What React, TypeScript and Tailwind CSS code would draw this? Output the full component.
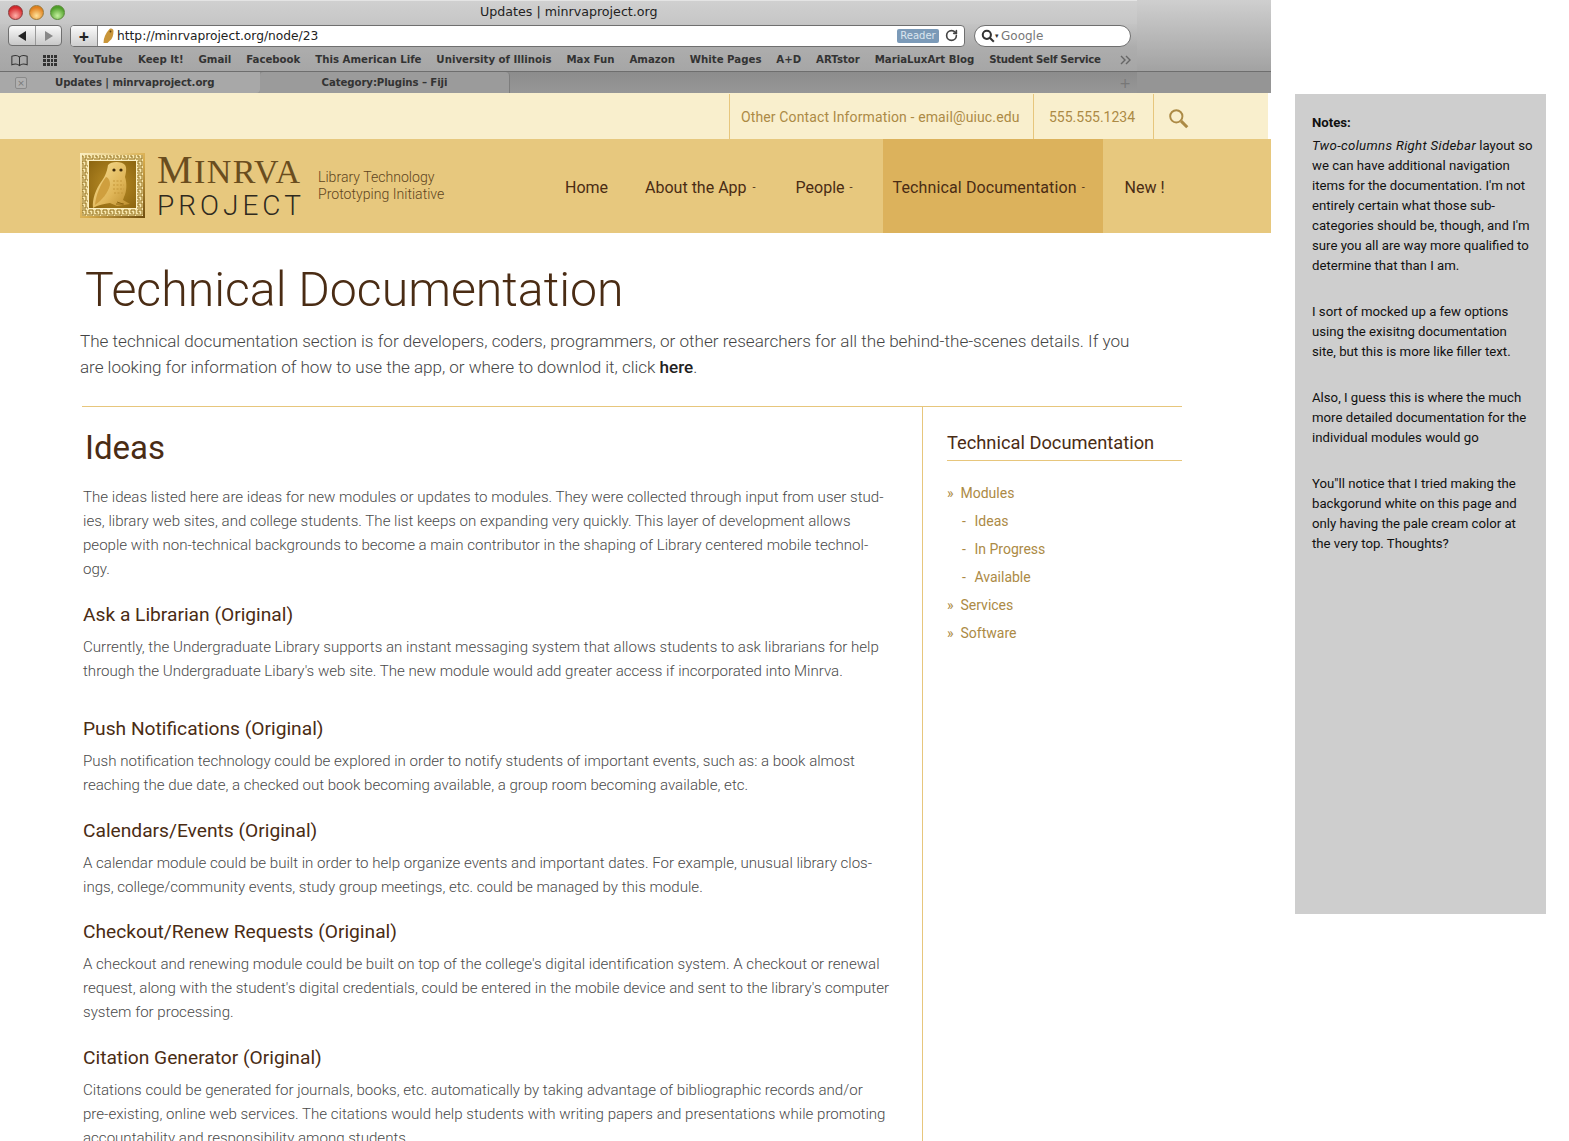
import React from "react";
import { RotateCw } from "lucide-react";

const bookmarks = [
  "Keep It!",
  "Gmail",
  "Facebook",
  "This American Life",
  "University of Illinois",
  "Max Fun",
  "Amazon",
  "White Pages",
  "A+D",
  "ARTstor",
  "MariaLuxArt Blog",
];

function Owl() {
  return (
    <svg viewBox="0 0 65 65" className="h-[65px] w-[65px] shrink-0">
      <defs>
        <linearGradient id="owlBody" x1="0" y1="0" x2="1" y2="1">
          <stop offset="0" stopColor="#f8e198" />
          <stop offset="0.6" stopColor="#e0b658" />
          <stop offset="1" stopColor="#b98a2a" />
        </linearGradient>
        <linearGradient id="frame" x1="0" y1="0" x2="1" y2="1">
          <stop offset="0" stopColor="#fbf0c4" />
          <stop offset="0.55" stopColor="#d8ac4c" />
          <stop offset="1" stopColor="#6e4c0c" />
        </linearGradient>
        <radialGradient id="inner" cx="0.5" cy="0.5" r="0.7">
          <stop offset="0" stopColor="#bd9028" />
          <stop offset="1" stopColor="#8c6510" />
        </radialGradient>
        <pattern id="keyBand" width="7" height="7" patternUnits="userSpaceOnUse">
          <path d="M0 6H6V1H2V4H4" fill="none" stroke="#8f6a16" strokeWidth="1" />
        </pattern>
      </defs>
      <rect width="65" height="65" fill="url(#frame)" />
      <rect x="2" y="2" width="61" height="61" fill="#f7e7ae" />
      <rect x="2" y="2" width="61" height="61" fill="url(#keyBand)" />
      <rect x="8" y="7" width="49" height="49" fill="#fbf0c4" />
      <rect x="9" y="8" width="47" height="47" fill="url(#inner)" />
      <path
        d="M28 12C31 8 42 8 45 12C47 15 46 20 45 24C47 30 47 38 44 44L43 47L50 51L37 53L30 50C24 51 18 52 13 55C12 46 16 36 21 29C24 25 27 20 28 12Z"
        fill="url(#owlBody)"
      />
      <path d="M26 24C20 32 16 42 15 52C22 47 28 40 30 32C30 28 29 25 26 24Z" fill="#cf9f3e" />
      <path d="M33 28h10M33 32h11M33 36h11M34 40h9" stroke="#c49638" strokeWidth="1" strokeDasharray="2 1.5" />
      <circle cx="34" cy="17" r="1.6" fill="#3f2a08" />
      <circle cx="41" cy="17" r="1.6" fill="#3f2a08" />
      <path d="M37 49l6 2M36 51h8" stroke="#8c6510" strokeWidth="1" />
    </svg>
  );
}

function Browser() {
  return (
    <div className="flex h-[93px] w-[1271px] bg-[#a3a3a3]">
      <div className="w-[1137px] shrink-0 text-[#222]">
        <div className="flex h-[24px] items-center border-t border-[#e4e4e4] bg-gradient-to-b from-[#d0d0d0] to-[#c6c6c6]">
          <div className="-mt-[1px] flex w-[65px] gap-[6px] pl-[8px]">
            <span className="h-[15px] w-[15px] shrink-0 rounded-full border border-[#8a3a3a] bg-[radial-gradient(circle_at_50%_75%,#ffb0a8,#d5282c_70%)]" />
            <span className="h-[15px] w-[15px] shrink-0 rounded-full border border-[#9a7a3a] bg-[radial-gradient(circle_at_50%_75%,#ffe39a,#e0801e_70%)]" />
            <span className="h-[15px] w-[15px] shrink-0 rounded-full border border-[#5a8a3a] bg-[radial-gradient(circle_at_50%_75%,#c4f09e,#4f9f2a_70%)]" />
          </div>
          <span className="ml-[415px] -mt-[1px] font-['DejaVu_Sans',sans-serif] text-[12.65px] leading-none">Updates | minrvaproject.org</span>
        </div>
        <div className="flex h-[23px] items-center bg-gradient-to-b from-[#c4c4c4] to-[#adadad] pl-[8px]">
          <div className="flex h-[21px] w-[54px] items-center rounded-[4px] border border-[#6f6f6f] bg-gradient-to-b from-[#fafafa] to-[#c8c8c8]">
            <span className="flex h-full w-[27px] items-center justify-center border-r border-[#999]">
              <svg viewBox="0 0 10 10" className="h-[10px] w-[10px]">
                <path d="M9 0v10L1 5z" fill="#222" />
              </svg>
            </span>
            <span className="flex flex-1 justify-center">
              <svg viewBox="0 0 10 10" className="h-[10px] w-[10px]">
                <path d="M1 0v10l8-5z" fill="#888" />
              </svg>
            </span>
          </div>
          <div className="ml-[8px] flex h-[22px] w-[895px] items-center rounded-[4px] border border-[#6f6f6f] bg-white">
            <span className="flex h-full w-[27px] items-center justify-center rounded-l-[3px] border-r border-[#888] bg-gradient-to-b from-[#fafafa] to-[#cfcfcf] text-[18px] font-bold leading-none">+</span>
            <svg viewBox="0 0 12 16" className="ml-[4px] h-[16px] w-[13px] shrink-0">
              <path d="M7 1c2-1 4 0 4 2 0 4-1 8-4 10l-2 2-4 0c0-5 2-10 6-14z" fill="#c9963a" />
              <circle cx="8" cy="3.5" r="0.9" fill="#5a3c0a" />
            </svg>
            <span className="ml-[2px] pt-[1px] font-['DejaVu_Sans',sans-serif] text-[12.25px] leading-none">http://minrvaproject.org/node/23</span>
            <span className="ml-auto flex h-[14px] w-[42px] items-center justify-center rounded-[2px] bg-[#7b9ab8] font-['DejaVu_Sans',sans-serif] text-[10px] leading-none text-[#dce6ef]">Reader</span>
            <RotateCw className="ml-[6px] mr-[6px] h-[13px] w-[13px] text-[#444]" strokeWidth={3} />
          </div>
          <div className="ml-[9px] flex h-[22px] w-[157px] items-center rounded-full border border-[#6f6f6f] bg-white pl-[6px]">
            <svg viewBox="0 0 24 24" className="h-[14px] w-[14px] shrink-0" fill="none" stroke="#333" strokeWidth="3.5">
              <circle cx="10" cy="10" r="7" />
              <path d="M15 15l7 7" />
            </svg>
            <span className="text-[7px] leading-none text-[#333]">▾</span>
            <span className="ml-[2px] font-['DejaVu_Sans',sans-serif] text-[12px] leading-none text-[#777]">Google</span>
          </div>
        </div>
        <div className="flex h-[25px] items-center border-b border-[#6e6e6e] bg-gradient-to-b from-[#adadad] to-[#a6a6a6] pl-[11px] pt-[2px] font-['DejaVu_Sans',sans-serif] text-[10.2px] font-bold leading-none text-[#333]">
          <svg viewBox="0 0 20 14" className="h-[13px] w-[17px] shrink-0" fill="none" stroke="#333" strokeWidth="1.2">
            <path d="M10 3C8 1 4 1 1 2v10c3-1 7-1 9 1 2-2 6-2 9-1V2c-3-1-7-1-9 1zM10 3v10" />
          </svg>
          <span className="ml-[15px] grid h-[11px] w-[14px] shrink-0 grid-cols-4 gap-px">
            {Array.from({ length: 12 }).map((_, i) => (
              <span key={i} className="bg-[#333]" />
            ))}
          </span>
          <div className="ml-[16px] flex items-center gap-[14.85px]">
            <span className="whitespace-nowrap tracking-[0.3px]">YouTube</span>
            {bookmarks.map((b) => (
              <span key={b} className="whitespace-nowrap">{b}</span>
            ))}
            <span className="whitespace-nowrap tracking-[-0.3px]">Student Self Service</span>
          </div>
          <svg viewBox="0 0 12 10" className="ml-[19px] h-[10px] w-[12px] shrink-0" fill="none" stroke="#666" strokeWidth="1.4">
            <path d="M1 1l4 4-4 4M6 1l4 4-4 4" />
          </svg>
        </div>
        <div className="flex h-[21px] items-stretch bg-gradient-to-b from-[#8c8c8c] to-[#979797] font-['DejaVu_Sans',sans-serif] text-[10.2px] font-bold leading-none tracking-[-0.1px] text-[#333]">
          <div className="flex w-[260px] items-center rounded-br-[4px] bg-[#a8a8a8] pl-[15px] pt-[1px]">
            <span className="flex h-[12px] w-[12px] items-center justify-center rounded-[2px] border border-[#8a8a8a] bg-[#b0b0b0] text-[9px] font-normal text-[#777]">×</span>
            <span className="ml-[28px]">Updates | minrvaproject.org</span>
          </div>
          <div className="flex w-[250px] items-center justify-center rounded-tl-[4px] rounded-tr-[4px] border-r border-[#7d7d7d] bg-[#9b9b9b] pt-[1px]">Category:Plugins – Fiji</div>
          <span className="ml-auto mr-[6px] self-center text-[14px] font-normal text-[#777]">+</span>
        </div>
      </div>
      <div className="flex flex-1 flex-col">
        <div className="h-[72px] border-b border-[#6e6e6e] bg-gradient-to-b from-[#cfcfcf] to-[#a2a2a2]" />
        <div className="flex-1 bg-[#959595]" />
      </div>
    </div>
  );
}

function Header() {
  return (
    <div className="font-['Roboto',sans-serif]">
      <div className="flex h-[46px] w-[1268px] justify-end bg-[#f9efcd] pt-[1px] text-[14px] text-[#ac8a45]">
        <div className="flex w-[304px] items-center border-l border-[#e7c67c] pl-[11px] pt-[1px] tracking-[0.13px]">Other Contact Information - email@uiuc.edu</div>
        <div className="flex w-[120px] items-center border-l border-[#e7c67c] pl-[15px] pt-[1px]">555.555.1234</div>
        <div className="flex w-[115px] items-center border-l border-[#e7c67c] pl-[14px] pt-[3px]">
          <svg viewBox="0 0 24 24" className="h-[21px] w-[21px]" fill="none" stroke="#ac8a45" strokeWidth="2.2">
            <circle cx="9.5" cy="9.5" r="7" />
            <path d="M15 15l7 7" strokeWidth="3.5" />
          </svg>
        </div>
      </div>
      <div className="flex h-[94px] items-center bg-[#e7c87e] pl-[80px]">
        <div className="-mt-[1px]">
          <Owl />
        </div>
        <div className="ml-[12px] flex w-[148px] flex-col">
          <span className="whitespace-nowrap font-['Liberation_Serif',serif] text-[40px] leading-[38px] tracking-[1.4px] text-[#6a4d1e]">
            M<span className="text-[34px]">INRVA</span>
          </span>
          <span className="whitespace-nowrap text-[28px] font-light leading-[30px] tracking-[4px] text-[#2f2a1e]">PROJECT</span>
        </div>
        <div className="ml-[13px] w-[140px] text-[14.1px] font-light leading-[17px] text-[#5f4520]">
          Library Technology
          <br />
          Prototyping Initiative
        </div>
        <nav className="ml-[107px] flex h-full items-stretch text-[16px] text-[#4a2c14]">
          <span className="flex items-center pt-[4px]">Home</span>
          <span className="ml-[37px] flex items-center pt-[4px]">About the App<span className="ml-[6px] text-[11px]">-</span></span>
          <span className="ml-[40px] flex items-center pt-[4px]">People<span className="ml-[5px] text-[11px]">-</span></span>
          <span className="ml-[30px] flex w-[220px] items-center bg-[#dcb25c] pl-[10px] pt-[4px] tracking-[0.12px]">Technical Documentation<span className="ml-[5px] text-[11px]">-</span></span>
          <span className="ml-[22px] flex items-center pt-[4px]">New !</span>
        </nav>
      </div>
    </div>
  );
}

function Article({ title, lines, className }: { title: string; lines: string[]; className?: string }) {
  return (
    <div className={className}>
      <h3 className="text-[19.2px] leading-[24px] text-[#4a2c14]">{title}</h3>
      <p className="mt-[8px] text-[15.08px] font-light leading-[24px] text-[#4a4a4a]">
        {lines.map((l) => (
          <span key={l} className="block whitespace-nowrap">{l}</span>
        ))}
      </p>
    </div>
  );
}

function Sidebar() {
  const item = "flex h-[28px] items-center";
  return (
    <aside className="w-[260px] border-l border-[#e7c67c] pl-[24px] pt-[25px]">
      <h2 className="border-b border-[#e7c67c] pb-[6px] text-[18.3px] leading-[22px] text-[#4a2c14]">Technical Documentation</h2>
      <ul className="mt-[18px] text-[14px] text-[#ac8a45]">
        <li className={item}><span className="w-[13.5px]">»</span>Modules</li>
        <li className={`${item} pl-[15px]`}><span className="w-[12.5px]">-</span>Ideas</li>
        <li className={`${item} pl-[15px]`}><span className="w-[12.5px]">-</span>In Progress</li>
        <li className={`${item} pl-[15px]`}><span className="w-[12.5px]">-</span>Available</li>
        <li className={item}><span className="w-[13.5px]">»</span>Services</li>
        <li className={item}><span className="w-[13.5px]">»</span>Software</li>
      </ul>
    </aside>
  );
}

function Content() {
  return (
    <div className="bg-white pl-[80px] font-['Roboto',sans-serif]">
      <h1 className="pl-[5px] pt-[28px] text-[48.2px] font-light leading-[58px] text-[#4a2c14]">Technical Documentation</h1>
      <p className="mt-[9px] whitespace-nowrap text-[17.1px] font-light leading-[26px] text-[#444]">
        The technical documentation section is for developers, coders, programmers, or other researchers for all the behind-the-scenes details. If you
        <br />
        <span className="tracking-[-0.04px]">are looking for information of how to use the app, or where to downlod it, click</span> <b className="font-medium text-[#222]">here</b>.
      </p>
      <div className="ml-[2px] mt-[26px] flex h-[800px] w-[1100px] border-t border-[#e7c67c]">
        <div className="w-[840px] shrink-0 pl-[1px]">
          <h2 className="pl-[2px] pt-[21px] text-[33px] font-normal leading-[40px] text-[#4a2c14]">Ideas</h2>
          <p className="mt-[17px] text-[15.08px] font-light leading-[24px] text-[#4a4a4a]">
            <span className="block whitespace-nowrap">The ideas listed here are ideas for new modules or updates to modules. They were collected through input from user stud-</span>
            <span className="block whitespace-nowrap">ies, library web sites, and college students. The list keeps on expanding very quickly. This layer of development allows</span>
            <span className="block whitespace-nowrap">people with non-technical backgrounds to become a main contributor in the shaping of Library centered mobile technol-</span>
            <span className="block whitespace-nowrap">ogy.</span>
          </p>
          <Article
            className="mt-[22px]"
            title="Ask a Librarian (Original)"
            lines={[
              "Currently, the Undergraduate Library supports an instant messaging system that allows students to ask librarians for help",
              "through the Undergraduate Libary's web site. The new module would add greater access if incorporated into Minrva.",
            ]}
          />
          <Article
            className="mt-[34px]"
            title="Push Notifications (Original)"
            lines={[
              "Push notification technology could be explored in order to notify students of important events, such as: a book almost",
              "reaching the due date, a checked out book becoming available, a group room becoming available, etc.",
            ]}
          />
          <Article
            className="mt-[22px]"
            title="Calendars/Events (Original)"
            lines={[
              "A calendar module could be built in order to help organize events and important dates. For example, unusual library clos-",
              "ings, college/community events, study group meetings, etc. could be managed by this module.",
            ]}
          />
          <Article
            className="mt-[21px]"
            title="Checkout/Renew Requests (Original)"
            lines={[
              "A checkout and renewing module could be built on top of the college's digital identification system. A checkout or renewal",
              "request, along with the student's digital credentials, could be entered in the mobile device and sent to the library's computer",
              "system for processing.",
            ]}
          />
          <Article
            className="mt-[22px]"
            title="Citation Generator (Original)"
            lines={[
              "Citations could be generated for journals, books, etc. automatically by taking advantage of bibliographic records and/or",
              "pre-existing, online web services. The citations would help students with writing papers and presentations while promoting",
              "accountability and responsibility among students.",
            ]}
          />
        </div>
        <Sidebar />
      </div>
    </div>
  );
}

function Notes() {
  return (
    <div className="ml-[24px] mt-[94px] h-[820px] w-[251px] bg-[#cecece] pl-[17px] pr-[12px] pt-[19px] font-['Roboto',sans-serif] text-[13.2px] leading-[20px] text-[#111]">
      <p className="font-bold">Notes:</p>
      <p className="mt-[3px]">
        <i className="tracking-[0.33px]">Two-columns Right Sidebar</i> layout so we can have additional navigation items for the documentation. I'm not entirely certain what those sub-categories should be, though, and I'm sure you all are way more qualified to determine that than I am.
      </p>
      <p className="mt-[26px]">I sort of mocked up a few options using the exisitng documentation site, but this is more like filler text.</p>
      <p className="mt-[26px]">Also, I guess this is where the much more detailed documentation for the individual modules would go</p>
      <p className="mt-[26px]">You"ll notice that I tried making the backgorund white on this page and only having the pale cream color at the very top. Thoughts?</p>
    </div>
  );
}

export default function App() {
  return (
    <div className="flex h-[1141px] w-[1569px] overflow-hidden bg-white">
      <div className="w-[1271px] shrink-0">
        <Browser />
        <Header />
        <Content />
      </div>
      <Notes />
    </div>
  );
}
